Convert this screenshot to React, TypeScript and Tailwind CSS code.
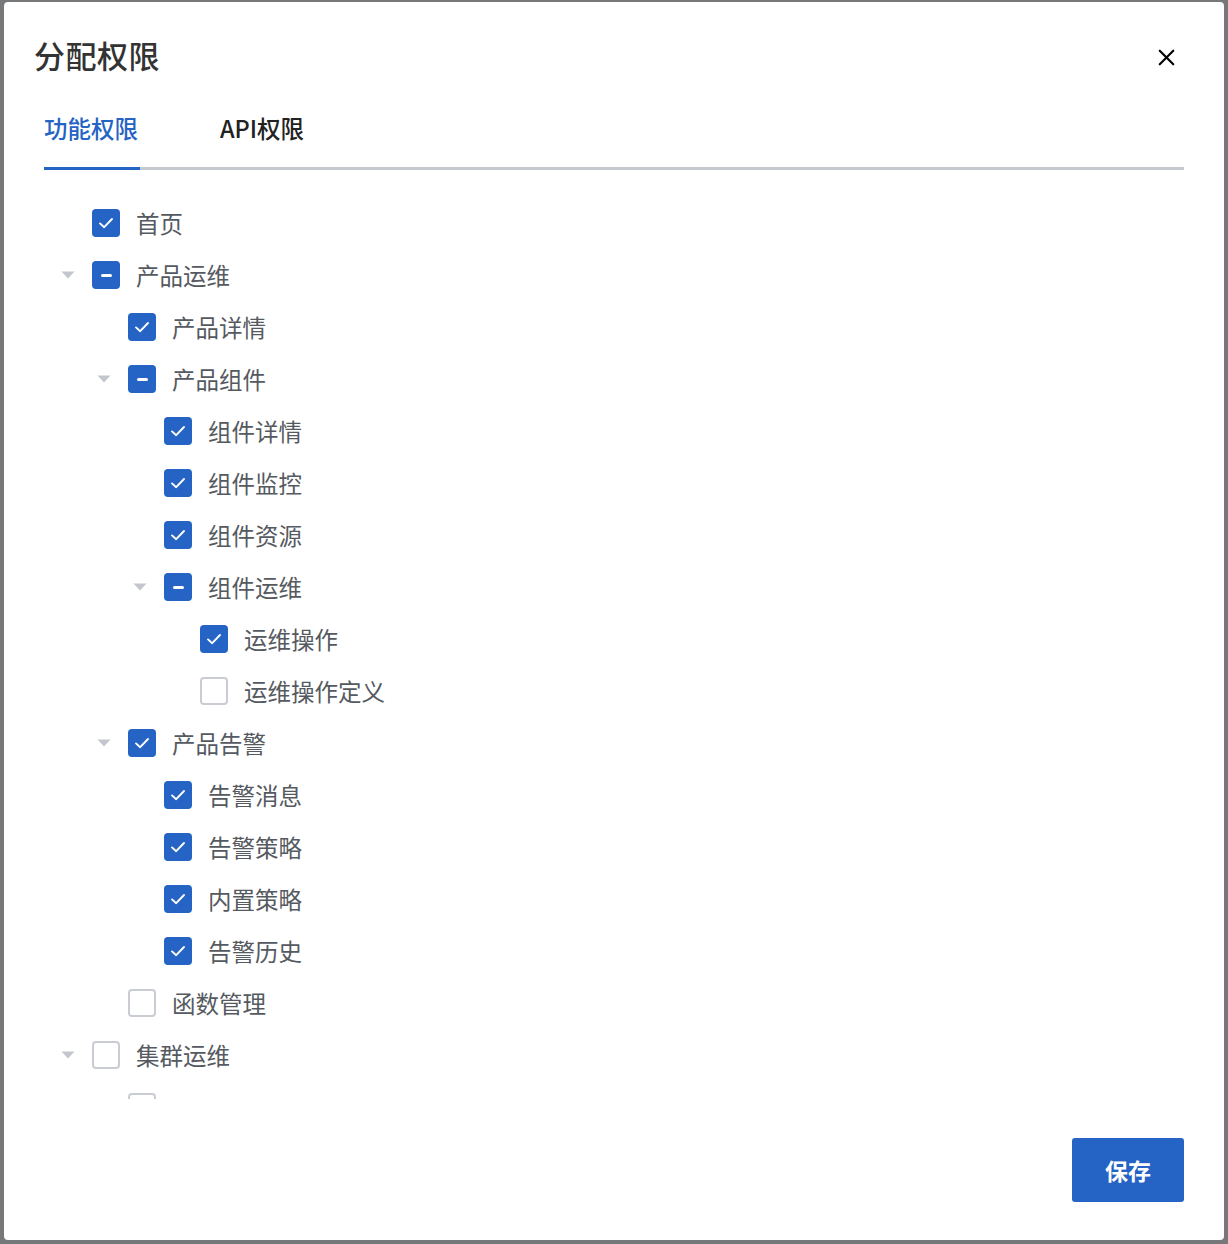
import React from 'react';
import { X } from 'lucide-react';

type Node = { label: string; level: number; state: 'checked' | 'partial' | 'empty'; caret?: boolean };

const nodes: Node[] = [
  { label: '首页', level: 0, state: 'checked' },
  { label: '产品运维', level: 0, state: 'partial', caret: true },
  { label: '产品详情', level: 1, state: 'checked' },
  { label: '产品组件', level: 1, state: 'partial', caret: true },
  { label: '组件详情', level: 2, state: 'checked' },
  { label: '组件监控', level: 2, state: 'checked' },
  { label: '组件资源', level: 2, state: 'checked' },
  { label: '组件运维', level: 2, state: 'partial', caret: true },
  { label: '运维操作', level: 3, state: 'checked' },
  { label: '运维操作定义', level: 3, state: 'empty' },
  { label: '产品告警', level: 1, state: 'checked', caret: true },
  { label: '告警消息', level: 2, state: 'checked' },
  { label: '告警策略', level: 2, state: 'checked' },
  { label: '内置策略', level: 2, state: 'checked' },
  { label: '告警历史', level: 2, state: 'checked' },
  { label: '函数管理', level: 1, state: 'empty' },
  { label: '集群运维', level: 0, state: 'empty', caret: true },
  // next row is scrolled below the fold, only the top of its box shows
  { label: '', level: 1, state: 'empty' },
];

const indent = ['pl-[52px]', 'pl-[88px]', 'pl-[124px]', 'pl-[160px]'];

function Checkbox({ state }: { state: Node['state'] }) {
  if (state === 'empty') {
    return <span className="w-7 h-7 rounded-[4px] border-2 border-[#c9cdd3] bg-white shrink-0" />;
  }
  return (
    <span className="w-7 h-7 rounded-[4px] bg-[#2563c4] flex items-center justify-center shrink-0">
      {state === 'checked' ? (
        <svg width="18" height="18" viewBox="0 0 18 18" fill="none">
          <path d="M3 9.4 L7.2 13.2 L15 5" stroke="white" strokeWidth="1.9" strokeLinecap="round" strokeLinejoin="round" />
        </svg>
      ) : (
        <span className="w-[11px] h-[3px] bg-white rounded-sm" />
      )}
    </span>
  );
}

export default function App() {
  return (
    <div className="w-[1228px] h-[1244px] bg-[#777879] pt-[2px] pl-[4px] overflow-hidden" style={{ fontFamily: '"Noto Sans CJK SC", "Noto Sans", sans-serif' }}>
      <div className="w-[1220px] h-[1238px] bg-white rounded-[4px] flex flex-col">
        <div className="flex items-center justify-between pl-[30px] pr-[44px] pt-[33px] h-[73px]">
          <h1 className="text-[31px] leading-[40px] font-medium text-[#333] tracking-[0.5px]">分配权限</h1>
          <X className="w-[27px] h-[27px] mt-[5px] text-black" strokeWidth={1.9} />
        </div>

        <div className="mx-10 mt-[38px] flex border-b-[3px] border-[#c6cacf]">
          <div className="relative pb-[24px]">
            <span className="text-[23.5px] leading-[30px] font-medium text-[#2563c4]">功能权限</span>
            <span className="absolute left-0 -bottom-[3px] w-[96px] h-[3px] bg-[#2563c4]" />
          </div>
          <div className="ml-[82px] pb-[24px]">
            <span className="text-[23.5px] leading-[30px] font-medium text-[#222]">API权限</span>
          </div>
        </div>

        <div className="mt-[27px] h-[902px] overflow-hidden">
          {nodes.map((n, i) => (
            <div key={i} className={`h-[52px] flex items-center ${indent[n.level]}`}>
              <span className="w-6 flex justify-center">
                {n.caret && (
                  <svg width="14" height="8" viewBox="0 0 14 8">
                    <path d="M0.5 0.5 H13.5 L7 7.5 Z" fill="#c3c7cd" />
                  </svg>
                )}
              </span>
              <span className="ml-3 flex">
                <Checkbox state={n.state} />
              </span>
              <span className="ml-4 text-[23.5px] leading-[30px] text-[#555a61]">{n.label}</span>
            </div>
          ))}
        </div>

        <div className="flex justify-end pr-10 mt-[39px]">
          <button className="w-[112px] h-[64px] rounded-[3px] bg-[#2563c4] text-white text-[23px] font-semibold">保存</button>
        </div>
      </div>
    </div>
  );
}
